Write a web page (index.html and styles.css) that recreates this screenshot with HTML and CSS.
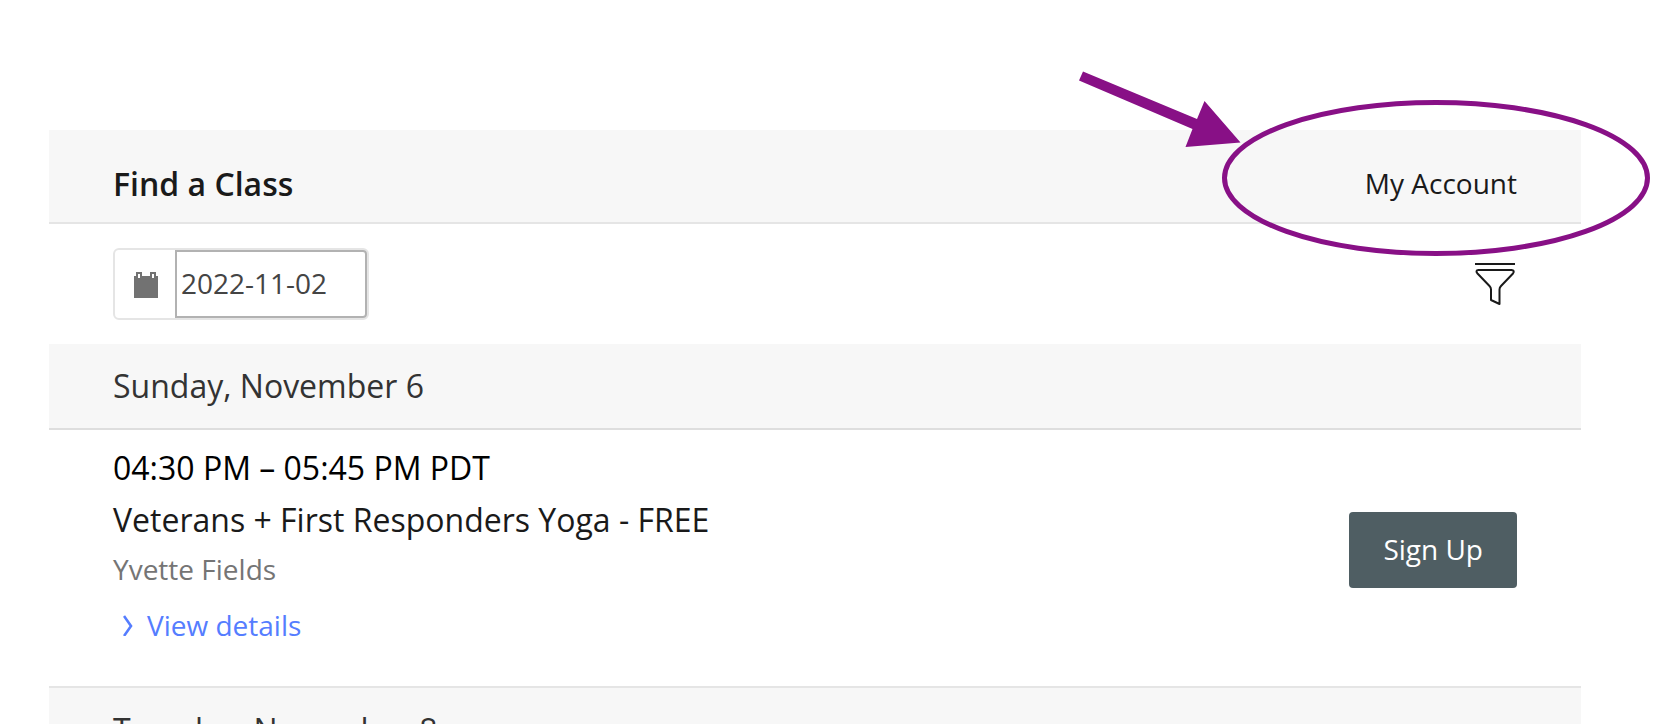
FILE: index.html
```html
<!DOCTYPE html>
<html lang="en">
<head>
<meta charset="utf-8">
<meta name="viewport" content="width=device-width, initial-scale=1">
<title>Find a Class</title>
<link rel="stylesheet" href="styles.css">
</head>
<body>
<main class="schedule">
  <header class="schedule-header">
    <h1 class="schedule-title">Find a Class</h1>
    <a class="account-link" href="#account">My Account</a>
  </header>

  <div class="toolbar">
    <div class="date-field">
      <label class="date-icon" for="date" aria-label="Date">
        <svg width="24" height="26" viewBox="0 0 24 26" aria-hidden="true">
          <path d="M0 4H2V0H8V4H16V0H22V4H24V26H0Z" fill="#727272"/>
          <path d="M4 2H6V6H4ZM18 2H20V6H18Z" fill="#fff"/>
        </svg>
      </label>
      <input class="date-input" id="date" type="text" value="2022-11-02">
    </div>
    <button class="filter-button" type="button" aria-label="Filter classes">
      <svg width="42" height="44" viewBox="0 0 42 44" fill="none" stroke="#1a1a1a" stroke-width="2" stroke-linejoin="round" aria-hidden="true">
        <path d="M0 2H40"/>
        <path d="M3.500 8H36.500C39 8 39.300 9.800 38 11.500L26 24Q24.500 25.500 24.500 27.500V42L16 38V27.500Q16 25.500 14.500 24L2.500 11.500C1 9.800 1 8 3.500 8Z"/>
      </svg>
    </button>
  </div>

  <section>
    <h2 class="day">Sunday, November 6</h2>
    <article class="class-row">
      <div class="class-info">
        <p class="class-time">04:30 PM – 05:45 PM PDT</p>
        <h3 class="class-name">Veterans + First Responders Yoga - FREE</h3>
        <p class="class-teacher">Yvette Fields</p>
        <a class="details-link" href="#details">
          <svg width="10" height="22" viewBox="0 0 10 22" fill="none" stroke="#557dff" stroke-width="2.600" aria-hidden="true"><path d="M1 2L8 12L1 22"/></svg>
          View details
        </a>
      </div>
      <button class="signup" type="button">Sign Up</button>
    </article>
  </section>

  <section>
    <h2 class="day">Tuesday, November 8</h2>
  </section>

  <svg class="callout" width="574" height="190" viewBox="0 0 574 190" aria-hidden="true">
    <path d="M6 3.500L120 51L127.500 33L163.500 74.500L108.500 79L115.500 61L2 12.500Z" fill="#881086"/>
    <ellipse cx="359" cy="110" rx="211.500" ry="75.500" fill="none" stroke="#881086" stroke-width="5"/>
  </svg>
</main>
</body>
</html>
```
FILE: styles.css
```css
* {
  box-sizing: border-box;
}

body {
  margin: 0;
  height: 100vh;
  overflow: hidden;
  background: #fff;
  color: #1a1a1a;
  font-family: "Open Sans", "Noto Sans", sans-serif;
  font-size: 28px;
  line-height: 38px;
}

h1, h2, h3, p {
  margin: 0;
  font-weight: 400;
}

a {
  color: inherit;
  text-decoration: none;
}

button, input {
  font: inherit;
}

.schedule {
  position: relative;
  margin: 130px 79px 0 49px;
}

.schedule-header {
  display: flex;
  align-items: center;
  justify-content: space-between;
  padding: 32px 64px 16px;
  background: #f7f7f7;
  border-bottom: 2px solid #e5e5e5;
}

.schedule-title {
  font-size: 32px;
  font-weight: 600;
  line-height: 44px;
}

.account-link {
  padding-bottom: 2px;
}

.toolbar {
  display: flex;
  align-items: center;
  justify-content: space-between;
  padding: 24px 64px;
}

.date-field {
  display: flex;
  width: 256px;
  height: 72px;
  border: 2px solid #e5e5e5;
  border-radius: 6px;
}

.date-icon {
  display: flex;
  flex: 0 0 60px;
  align-items: center;
  justify-content: center;
  padding: 2px 0 0 2px;
}

.date-input {
  flex: 1;
  min-width: 0;
  padding: 0 4px 2px;
  border: 2px solid #b2b2b2;
  border-radius: 0 4px 4px 0;
  outline: none;
  background: #fff;
  color: #444;
}

.filter-button {
  display: flex;
  padding: 0;
  border: 0;
  background: none;
}

.day {
  padding: 20px 64px;
  background: #f7f7f7;
  border-bottom: 2px solid #dedede;
  color: #333;
  font-size: 32px;
  line-height: 44px;
}

.class-row {
  display: flex;
  align-items: center;
  justify-content: space-between;
  padding: 16px 64px 32px;
  border-bottom: 2px solid #e5e5e5;
}

.class-info {
  display: flex;
  flex-direction: column;
  align-items: flex-start;
  gap: 8px;
}

.class-time, .class-name {
  font-size: 32px;
  line-height: 44px;
}

.class-time {
  color: #000;
}

.class-teacher {
  color: #757575;
}

.details-link {
  display: flex;
  align-items: center;
  gap: 14px;
  padding: 10px;
  color: #557dff;
}

.signup {
  padding: 18px 34px 20px;
  border: 0;
  border-radius: 4px;
  background: #4f5e63;
  color: #fff;
}

.callout {
  position: absolute;
  top: -62px;
  right: -70px;
  pointer-events: none;
}
```
